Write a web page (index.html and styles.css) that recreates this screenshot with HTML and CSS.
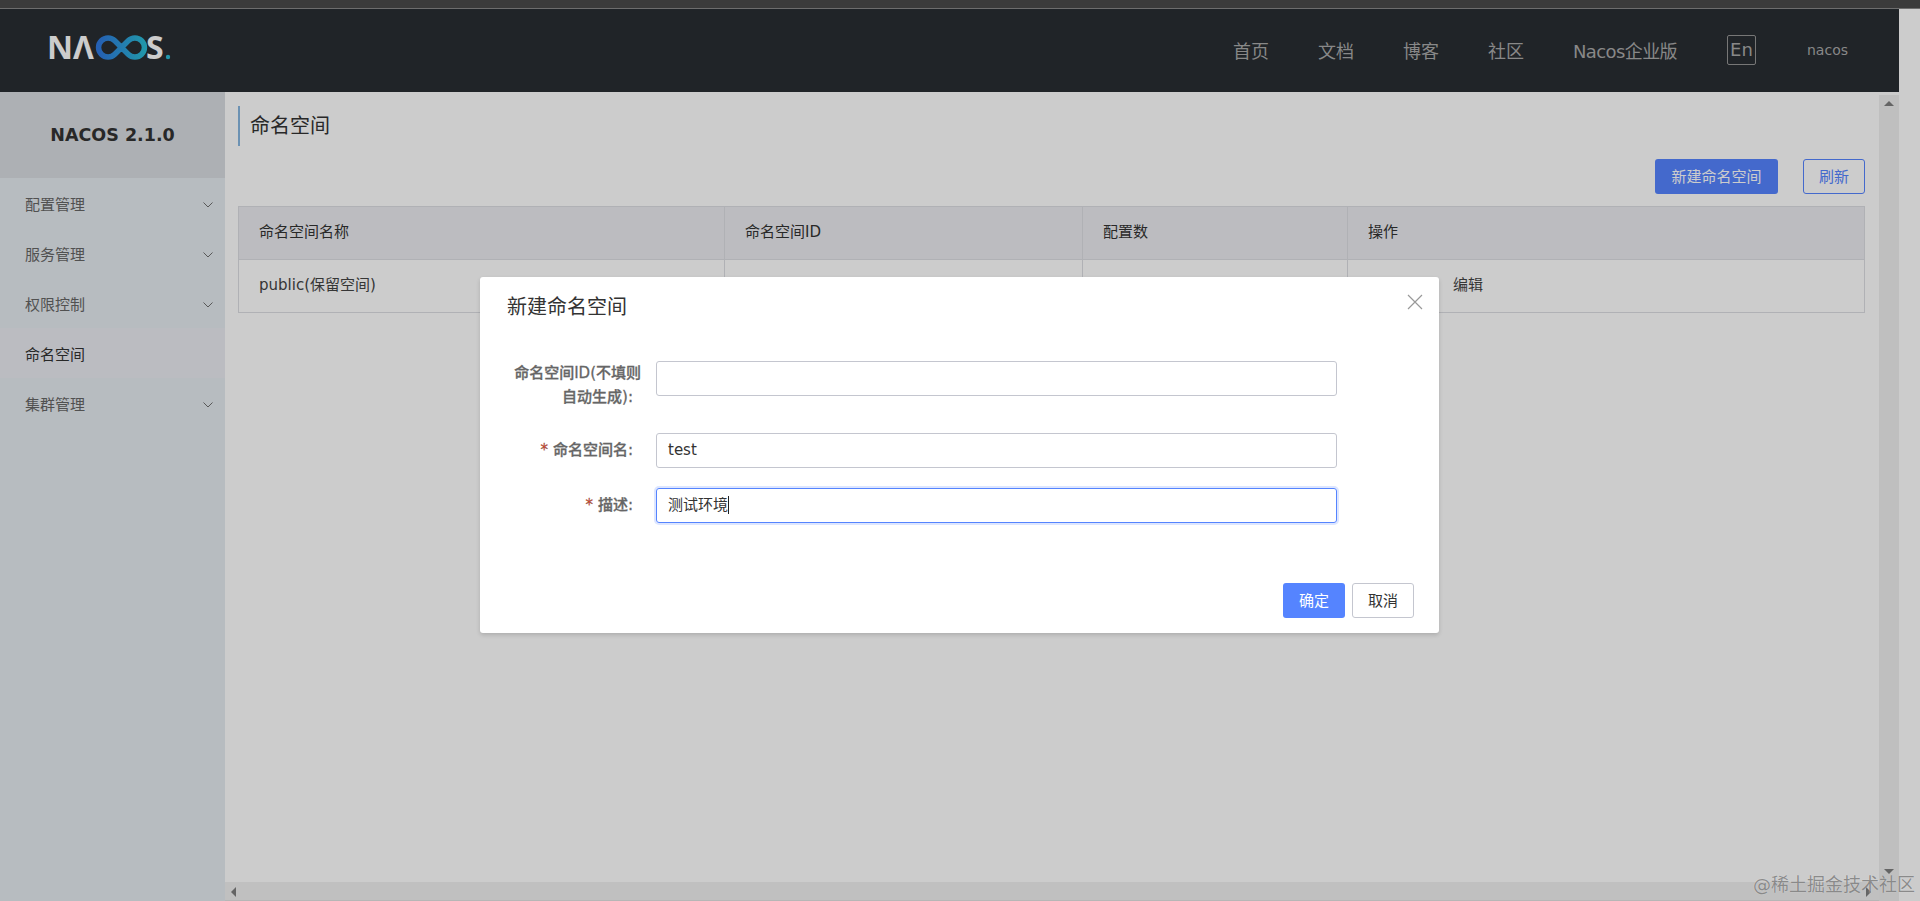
FILE: index.html
```html
<!DOCTYPE html>
<html lang="zh-CN">
<head>
	<meta charset="utf-8">
	<meta name="viewport" content="width=device-width, initial-scale=1">
	<title>Nacos</title>
	<link rel="stylesheet" href="styles.css">
</head>
<body>
<div class="window-strip"></div>
<div class="app">
	<header class="topbar">
		<svg class="logo" width="130" height="51" viewBox="45 25 130 51" role="img" aria-label="NACOS.">
			<defs>
				<linearGradient id="loop" x1="0" x2="1" y1="0" y2="0">
					<stop offset="0" stop-color="#2f78e0"/>
					<stop offset="1" stop-color="#2abcd6"/>
				</linearGradient>
			</defs>
			<text class="logo-text" x="47" y="59">N</text>
			<text class="logo-text" x="73" y="59">Λ</text>
			<path d="M114.8 40.8 L128.2 54.2 A9.5 9.5 0 1 0 128.2 40.8 L114.8 54.2 A9.5 9.5 0 1 1 114.8 40.8Z" fill="none" stroke="url(#loop)" stroke-width="5.5"/>
			<text class="logo-text" x="146" y="59">S</text>
			<circle cx="168" cy="57" r="2.2" fill="#2abcd6"/>
		</svg>
		<nav class="topnav">
			<a>首页</a>
			<a>文档</a>
			<a>博客</a>
			<a>社区</a>
			<a class="tight">Nacos企业版</a>
			<a class="lang">En</a>
			<a class="user">nacos</a>
		</nav>
	</header>
	<div class="layout">
		<aside class="sidebar">
			<div class="sidebar-head">NACOS 2.1.0</div>
			<ul class="menu">
				<li>配置管理<svg class="chevron" width="12" height="8" viewBox="0 0 12 8"><path d="M1.5 1.5 L6 6 L10.5 1.5" fill="none" stroke="currentColor"/></svg></li>
				<li>服务管理<svg class="chevron" width="12" height="8" viewBox="0 0 12 8"><path d="M1.5 1.5 L6 6 L10.5 1.5" fill="none" stroke="currentColor"/></svg></li>
				<li>权限控制<svg class="chevron" width="12" height="8" viewBox="0 0 12 8"><path d="M1.5 1.5 L6 6 L10.5 1.5" fill="none" stroke="currentColor"/></svg></li>
				<li class="active">命名空间</li>
				<li>集群管理<svg class="chevron" width="12" height="8" viewBox="0 0 12 8"><path d="M1.5 1.5 L6 6 L10.5 1.5" fill="none" stroke="currentColor"/></svg></li>
			</ul>
		</aside>
		<div class="pane">
			<main class="content">
				<h1 class="page-title">命名空间</h1>
				<div class="toolbar">
					<button class="btn btn-primary btn-new">新建命名空间</button>
					<button class="btn btn-outline">刷新</button>
				</div>
				<table class="ns-table">
					<colgroup>
						<col class="col-name">
						<col class="col-id">
						<col class="col-count">
						<col>
					</colgroup>
					<thead>
						<tr>
							<th>命名空间名称</th>
							<th>命名空间ID</th>
							<th>配置数</th>
							<th>操作</th>
						</tr>
					</thead>
					<tbody>
						<tr>
							<td>public(保留空间)</td>
							<td></td>
							<td></td>
							<td class="ops">编辑</td>
						</tr>
					</tbody>
				</table>
			</main>
			<div class="hscroll">
				<span class="arrow arrow-left"></span>
				<span class="arrow arrow-right"></span>
			</div>
		</div>
		<div class="vscroll">
			<span class="arrow arrow-up"></span>
			<span class="arrow arrow-down"></span>
		</div>
	</div>
</div>

<div class="mask">
	<div class="dialog">
		<div class="dialog-head">
			<h2>新建命名空间</h2>
			<svg class="close" width="16" height="16" viewBox="0 0 16 16"><path d="M1 1 L15 15 M15 1 L1 15" stroke="currentColor" stroke-width="1.2" fill="none"/></svg>
		</div>
		<form class="dialog-form">
			<div class="form-row row-tall">
				<label class="tall">命名空间ID(不填则自动生成)</label>
				<div class="input"></div>
			</div>
			<div class="form-row">
				<label class="required">命名空间名</label>
				<div class="input">test</div>
			</div>
			<div class="form-row">
				<label class="required">描述</label>
				<div class="input focused"><span class="caret">测试环境</span></div>
			</div>
		</form>
		<div class="dialog-foot">
			<button class="btn btn-primary btn-bright">确定</button>
			<button class="btn btn-plain">取消</button>
		</div>
	</div>
</div>
<div class="watermark">@稀土掘金技术社区</div>
</body>
</html>
```

FILE: styles.css
```css
html,body
{
	height: 100%;
	margin: 0;
}

body
{
	display: flex;
	flex-direction: column;
	overflow: hidden;
	background: #fff;
	color: #333;
	font-family: "DejaVu Sans", "Noto Sans CJK SC", sans-serif;
	font-size: 14px;
}

.window-strip
{
	flex: none;
	height: 8px;
	border-bottom: 1px solid #6d6d6d;
	background: #3b3b3b;
}

.app
{
	display: flex;
	flex: 1;
	flex-direction: column;
	width: 1899px;
	min-height: 0;
}

.topbar
{
	display: flex;
	flex: none;
	align-items: center;
	justify-content: space-between;
	height: 83px;
	padding: 0 51px 0 45px;
	box-sizing: border-box;
	background: #282d32;
}

.logo
{
	display: block;
}

.logo-text
{
	fill: #fff;
	font-family: "Open Sans", sans-serif;
	font-size: 32px;
	font-weight: 700;
}

.topnav
{
	display: flex;
	align-items: center;
	gap: 49px;
	margin-top: -2px;
	color: #aaa;
	font-size: 18px;
}

.tight
{
	letter-spacing: -0.6px;
}

.lang
{
	width: 29px;
	height: 30px;
	margin-left: 1px;
	border: 1px solid #959595;
	border-radius: 2px;
	box-sizing: border-box;
	line-height: 28px;
	text-align: center;
}

.user
{
	margin-left: 2px;
	font-size: 14px;
}

.layout
{
	display: flex;
	flex: 1;
	min-height: 0;
}

.sidebar
{
	flex: none;
	width: 225px;
	background: #e5ebf0;
}

.sidebar-head
{
	height: 86px;
	background: #d9dde1;
	font-size: 17.5px;
	font-weight: bold;
	line-height: 86px;
	text-align: center;
}

.menu
{
	padding: 0;
	margin: 0;
	list-style: none;
}

.menu li
{
	position: relative;
	height: 50px;
	padding-left: 25px;
	color: #666;
	font-size: 15px;
	line-height: 54px;
}

.menu li.active
{
	background: #eaebf2;
	color: #333;
}

.chevron
{
	position: absolute;
	top: 23px;
	right: 11px;
	color: #6e6e6e;
}

.pane
{
	display: flex;
	flex: 1;
	flex-direction: column;
	min-width: 0;
}

.content
{
	flex: 1;
	padding: 14px 14px 0 13px;
}

.page-title
{
	height: 40px;
	padding-left: 10px;
	border-left: 2px solid #88b7e0;
	margin: 0;
	font-size: 20px;
	font-weight: normal;
	line-height: 40px;
}

.toolbar
{
	display: flex;
	justify-content: flex-end;
	gap: 25px;
	margin: 13px 0 12px;
}

.btn
{
	height: 35px;
	padding: 0 0 2px;
	border: 1px solid transparent;
	border-radius: 3px;
	font-family: inherit;
	font-size: 15px;
}

.btn-primary
{
	background: #5584ff;
	color: #fff;
}

.btn-new
{
	width: 123px;
}

.btn-outline
{
	width: 62px;
	border-color: #5584ff;
	background: transparent;
	color: #5584ff;
}

.btn-bright,
.btn-plain
{
	width: 62px;
}

.btn-plain
{
	border-color: #c4c6cf;
	background: #fff;
	color: #333;
}

.ns-table
{
	width: 100%;
	border: 1px solid #dcdee3;
	border-collapse: collapse;
	table-layout: fixed;
}

.col-name
{
	width: 486px;
}

.col-id
{
	width: 358px;
}

.col-count
{
	width: 265px;
}

.ns-table th,
.ns-table td
{
	height: 53px;
	padding: 0 0 6px 20px;
	border: 1px solid #dcdee3;
	box-sizing: border-box;
	font-size: 15px;
	font-weight: normal;
	text-align: left;
}

.ns-table th
{
	background: #ebecf0;
}

.ns-table td
{
	color: #444;
}

.ns-table .ops
{
	padding-left: 105px;
}

.hscroll
{
	position: relative;
	flex: none;
	height: 18px;
	border-bottom: 1px solid #e4e4e4;
	background: #f1f1f1;
}

.vscroll
{
	position: relative;
	flex: none;
	width: 20px;
	margin-top: 3px;
	background: #efefef;
}

.arrow
{
	position: absolute;
	width: 0;
	height: 0;
	border: 5px solid transparent;
}

.arrow-left
{
	top: 5px;
	left: 6px;
	border-right-color: #7f7f7f;
	border-left-width: 0;
}

.arrow-right
{
	top: 5px;
	right: 8px;
	border-left-color: #7f7f7f;
	border-right-width: 0;
}

.arrow-up
{
	top: 6px;
	left: 5px;
	border-bottom-color: #7f7f7f;
	border-top-width: 0;
}

.arrow-down
{
	bottom: 27px;
	left: 5px;
	border-top-color: #7f7f7f;
	border-bottom-width: 0;
}

.mask
{
	position: absolute;
	top: 9px;
	right: 0;
	bottom: 0;
	left: 0;
	display: flex;
	align-items: flex-start;
	justify-content: center;
	padding: 268px 1px 0 0;
	background: rgb(0 0 0 / 20%);
}

.dialog
{
	width: 959px;
	height: 356px;
	border-radius: 3px;
	box-sizing: border-box;
	background: #fff;
	box-shadow: 0 2px 4px rgb(0 0 0 / 15%);
}

.dialog-head
{
	position: relative;
	height: 84px;
	padding: 14px 0 0 27px;
	box-sizing: border-box;
}

.dialog-head h2
{
	margin: 0;
	font-size: 20px;
	font-weight: normal;
	line-height: 32px;
}

.close
{
	position: absolute;
	top: 17px;
	right: 16px;
	color: #999;
}

.dialog-form
{
	display: flex;
	flex-direction: column;
	gap: 20px;
	height: 222px;
	padding-left: 15px;
}

.form-row
{
	display: flex;
	align-items: flex-start;
	gap: 15px;
}

.row-tall
{
	margin-bottom: 4px;
}

.form-row label
{
	width: 146px;
	padding-left: 10px;
	box-sizing: border-box;
	color: #666;
	font-size: 15px;
	font-weight: 500;
	line-height: 35px;
	text-align: right;
	-webkit-text-stroke: 0.3px #666;
}

.form-row label::after
{
	content: ":";
	margin-right: 8px;
}

.form-row label.tall
{
	line-height: 24px;
}

.form-row .required::before
{
	content: "*";
	margin-right: 5px;
	color: #ff3000;
}

.input
{
	width: 681px;
	height: 35px;
	padding: 0 11px;
	border: 1px solid #c4c6cf;
	border-radius: 3px;
	box-sizing: border-box;
	color: #333;
	font-size: 15px;
	line-height: 33px;
}

.input.focused
{
	border-color: #5584ff;
	box-shadow: 0 0 0 2px rgb(85 132 255 / 20%);
}

.caret
{
	border-right: 1px solid #222;
}

.dialog-foot
{
	display: flex;
	justify-content: flex-end;
	gap: 7px;
	padding-right: 25px;
}

.watermark
{
	position: absolute;
	right: 5px;
	bottom: 5px;
	color: rgb(110 110 110 / 75%);
	font-size: 18px;
	line-height: 22px;
	text-shadow: 0 0 1px rgb(255 255 255 / 50%);
}
```
